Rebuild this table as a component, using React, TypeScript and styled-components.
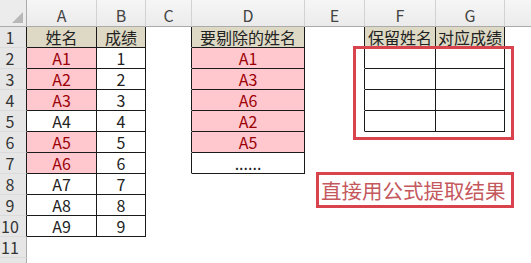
import React from 'react';
import styled, { createGlobalStyle } from 'styled-components';

const GlobalStyle = createGlobalStyle`
  html, body {
    margin: 0;
    padding: 0;
    background: #ffffff;
    overflow: hidden;
  }
  body {
    font-family: "Noto Sans CJK SC", "Noto Sans", sans-serif;
  }
`;

const LINE = '#1a1a1a';

const Sheet = styled.div`
  position: relative;
  width: 531px;
  height: 263px;
  overflow: hidden;
`;

const Grid = styled.div`
  display: grid;
  grid-template-columns: 27px 70px 49px 46px 113px 60px 71px 69px 40px;
  grid-template-rows: 27px repeat(12, 21px);
`;

const Corner = styled.div`
  position: relative;
  box-sizing: border-box;
  background: #ececec;
  border-right: 1px solid #ababab;
  border-bottom: 1px solid #ababab;
  &::after {
    content: '';
    position: absolute;
    right: 3px;
    bottom: 3px;
    width: 0;
    height: 0;
    border-left: 11px solid transparent;
    border-bottom: 11px solid #b8b8b8;
  }
`;

const ColHead = styled.div`
  box-sizing: border-box;
  background: linear-gradient(#f6f6f6, #ebebeb);
  border-right: 1px solid #d2d2d2;
  border-bottom: 1px solid #ababab;
  color: #444444;
  font-size: 16px;
  line-height: 20px;
  padding-top: 5px;
  text-align: center;
`;

const RowHead = styled.div<{ $edge: string }>`
  box-sizing: border-box;
  background: #e6e6e6;
  border-right: 1px solid ${p => p.$edge};
  border-bottom: 1px solid #dadada;
  color: #333333;
  font-size: 16px;
  line-height: 20px;
  padding-right: 6px;
  text-align: center;
`;

type Fill = 'none' | 'head' | 'bad';

const Cell = styled.div<{ $fill: Fill; $right: string; $bottom: string }>`
  box-sizing: border-box;
  background: ${p => (p.$fill === 'head' ? '#ddd9c4' : p.$fill === 'bad' ? '#ffc7ce' : '#ffffff')};
  color: ${p => (p.$fill === 'bad' ? '#9c0006' : '#222222')};
  border-right: 1px solid ${p => p.$right};
  border-bottom: 1px solid ${p => p.$bottom};
  font-size: 16px;
  line-height: 20px;
  text-align: center;
  white-space: nowrap;
`;

const Highlight = styled.div`
  position: absolute;
  left: 353px;
  top: 46px;
  width: 161px;
  height: 94px;
  box-sizing: border-box;
  border: 3px solid #d8434d;
`;

const Note = styled.div`
  position: absolute;
  left: 316px;
  top: 172px;
  width: 198px;
  height: 36px;
  box-sizing: border-box;
  border: 3px solid #d8434d;
  background: #ffffff;
  color: #c4585d;
  font-size: 20.5px;
  line-height: 30px;
  padding-left: 2px;
  white-space: nowrap;
`;

const COLS = ['A', 'B', 'C', 'D', 'E', 'F', 'G', 'H'];

type Data = { text: string; fill: Fill };

// sheet contents, keyed "row,col" with col 1 = A
const cells: Record<string, Data> = {};
const put = (r: number, c: number, text: string, fill: Fill = 'none') => {
  cells[`${r},${c}`] = { text, fill };
};

put(1, 1, '姓名', 'head');
put(1, 2, '成绩', 'head');
put(1, 4, '要剔除的姓名', 'head');
put(1, 6, '保留姓名', 'head');
put(1, 7, '对应成绩', 'head');

const removed = ['A1', 'A2', 'A3', 'A5', 'A6'];
for (let i = 1; i <= 9; i++) {
  const name = `A${i}`;
  put(i + 1, 1, name, removed.includes(name) ? 'bad' : 'none');
  put(i + 1, 2, String(i));
}
['A1', 'A3', 'A6', 'A2', 'A5'].forEach((n, i) => put(i + 2, 4, n, 'bad'));
put(7, 4, '......');
for (let r = 2; r <= 5; r++) {
  put(r, 6, '');
  put(r, 7, '');
}

const boxed = (r: number, c: number) => cells[`${r},${c}`] !== undefined;

export default function App() {
  const rows = Array.from({ length: 12 }, (_, i) => i + 1);
  return (
    <>
      <GlobalStyle />
      <Sheet>
        <Grid>
          <Corner />
          {COLS.map(c => (
            <ColHead key={c}>{c === 'H' ? '' : c}</ColHead>
          ))}
          {rows.map(r => (
            <React.Fragment key={r}>
              <RowHead $edge={boxed(r, 1) ? LINE : '#ababab'}>{r}</RowHead>
              {COLS.map((_, i) => {
                const c = i + 1;
                const d = cells[`${r},${c}`];
                const right = boxed(r, c) || boxed(r, c + 1) ? LINE : 'transparent';
                const bottom = boxed(r, c) || boxed(r + 1, c) ? LINE : 'transparent';
                return (
                  <Cell key={c} $fill={d ? d.fill : 'none'} $right={right} $bottom={bottom}>
                    {d ? d.text : ''}
                  </Cell>
                );
              })}
            </React.Fragment>
          ))}
        </Grid>
        <Highlight />
        <Note>直接用公式提取结果</Note>
      </Sheet>
    </>
  );
}
